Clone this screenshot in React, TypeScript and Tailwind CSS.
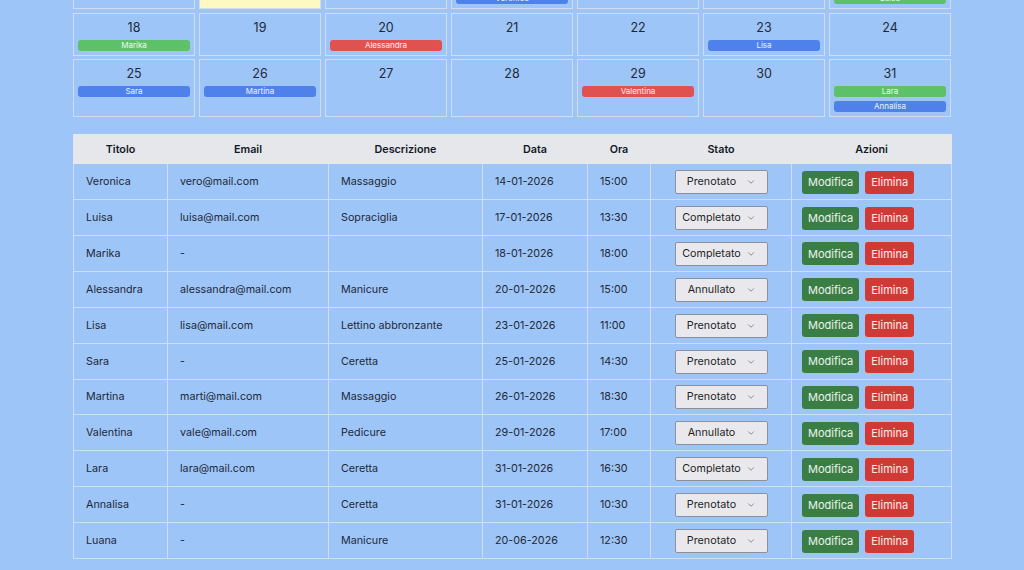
import { ChevronDown } from 'lucide-react'

type Status = 'Prenotato' | 'Completato' | 'Annullato'

interface Appointment {
  titolo: string
  email: string
  descrizione: string
  data: string
  ora: string
  stato: Status
}

const appointments: Appointment[] = [
  { titolo: 'Veronica', email: 'vero@mail.com', descrizione: 'Massaggio', data: '14-01-2026', ora: '15:00', stato: 'Prenotato' },
  { titolo: 'Luisa', email: 'luisa@mail.com', descrizione: 'Sopraciglia', data: '17-01-2026', ora: '13:30', stato: 'Completato' },
  { titolo: 'Marika', email: '-', descrizione: '', data: '18-01-2026', ora: '18:00', stato: 'Completato' },
  { titolo: 'Alessandra', email: 'alessandra@mail.com', descrizione: 'Manicure', data: '20-01-2026', ora: '15:00', stato: 'Annullato' },
  { titolo: 'Lisa', email: 'lisa@mail.com', descrizione: 'Lettino abbronzante', data: '23-01-2026', ora: '11:00', stato: 'Prenotato' },
  { titolo: 'Sara', email: '-', descrizione: 'Ceretta', data: '25-01-2026', ora: '14:30', stato: 'Prenotato' },
  { titolo: 'Martina', email: 'marti@mail.com', descrizione: 'Massaggio', data: '26-01-2026', ora: '18:30', stato: 'Prenotato' },
  { titolo: 'Valentina', email: 'vale@mail.com', descrizione: 'Pedicure', data: '29-01-2026', ora: '17:00', stato: 'Annullato' },
  { titolo: 'Lara', email: 'lara@mail.com', descrizione: 'Ceretta', data: '31-01-2026', ora: '16:30', stato: 'Completato' },
  { titolo: 'Annalisa', email: '-', descrizione: 'Ceretta', data: '31-01-2026', ora: '10:30', stato: 'Prenotato' },
  { titolo: 'Luana', email: '-', descrizione: 'Manicure', data: '20-06-2026', ora: '12:30', stato: 'Prenotato' },
]

const pillColor: Record<Status, string> = {
  Prenotato: 'bg-[#4f81eb]',
  Completato: 'bg-[#5cc169]',
  Annullato: 'bg-[#e0524f]',
}

const weekDays = ['Dom', 'Lun', 'Mar', 'Mer', 'Gio', 'Ven', 'Sab']
const TODAY = 12

// gennaio 2026 parte di giovedì
function buildMonth() {
  const cells: (number | null)[] = [null, null, null, null]
  for (let d = 1; d <= 31; d++) cells.push(d)
  const weeks: (number | null)[][] = []
  for (let i = 0; i < cells.length; i += 7) weeks.push(cells.slice(i, i + 7))
  return weeks
}

function eventsFor(day: number) {
  const key = `${String(day).padStart(2, '0')}-01-2026`
  return appointments.filter((a) => a.data === key)
}

function Calendar() {
  const weeks = buildMonth()
  return (
    <div>
      <div className="flex items-center justify-between py-3">
        <button className="px-3 py-1 rounded bg-[#4f81eb] text-white text-[12px]">‹</button>
        <h2 className="text-[18px] font-semibold text-[#1f2937]">Gennaio 2026</h2>
        <button className="px-3 py-1 rounded bg-[#4f81eb] text-white text-[12px]">›</button>
      </div>
      <div className="grid grid-cols-7 gap-1 mb-1">
        {weekDays.map((d) => (
          <div key={d} className="text-center text-[12px] font-semibold text-[#1f2937] py-1">
            {d}
          </div>
        ))}
      </div>
      <div className="flex flex-col gap-[3.5px]">
        {weeks.map((week, wi) => (
          <div key={wi} className="grid grid-cols-7 gap-1">
            {week.map((day, di) => (
              <div
                key={di}
                className={`border border-[#cfdcf1] p-1 min-h-[43px] ${
                  day === TODAY ? 'bg-[#fef9c3]' : ''
                }`}
              >
                {day && (
                  <>
                    <div className="text-center text-[12.5px] leading-[19px] text-[#1f2937] mb-[3px]">{day}</div>
                    <div className="flex flex-col gap-1">
                      {eventsFor(day).map((e) => (
                        <div
                          key={e.titolo}
                          className={`${pillColor[e.stato]} h-[11px] rounded-[3px] text-center text-[8px] leading-[11px] text-white/90`}
                        >
                          {e.titolo}
                        </div>
                      ))}
                    </div>
                  </>
                )}
              </div>
            ))}
          </div>
        ))}
      </div>
    </div>
  )
}

function StatusSelect({ value }: { value: Status }) {
  return (
    <div className="mx-auto w-[93px] h-[24px] flex items-center border border-[#8d909a] rounded-[2px] bg-[#e9e9ed] text-[#1f1f1f]">
      <span className="flex-1 text-center pl-[4px] text-[10.75px]">{value}</span>
      <ChevronDown className="w-[10px] h-[10px] ml-[2px] mr-[11px] text-[#555]" strokeWidth={1.5} />
    </div>
  )
}

const headers = [
  { label: 'Titolo', w: 'w-[94px]' },
  { label: 'Email', w: 'w-[161px]' },
  { label: 'Descrizione', w: 'w-[154px]' },
  { label: 'Data', w: 'w-[105px]' },
  { label: 'Ora', w: 'w-[63px]' },
  { label: 'Stato', w: 'w-[141px]' },
  { label: 'Azioni', w: 'w-[160px]' },
]

function AppointmentsTable() {
  const td = 'border border-[#d0def3] px-3 pt-px text-[10.75px] text-[#1f2937]'
  return (
    <table className="w-full table-fixed border-collapse mt-[17px]">
      <thead>
        <tr className="h-[29px] bg-[#e5e7eb]">
          {headers.map((h) => (
            <th key={h.label} className={`${h.w} border border-[#e5e7eb] pt-px text-center text-[10.75px] font-semibold text-[#111827]`}>
              {h.label}
            </th>
          ))}
        </tr>
      </thead>
      <tbody>
        {appointments.map((a) => (
          <tr key={a.titolo} className="h-[35.9px]">
            <td className={td}>{a.titolo}</td>
            <td className={td}>{a.email}</td>
            <td className={td}>{a.descrizione}</td>
            <td className={td}>{a.data}</td>
            <td className={td}>{a.ora}</td>
            <td className={td}>
              <StatusSelect value={a.stato} />
            </td>
            <td className={`${td} px-[10px]`}>
              <div className="flex gap-[6px]">
                <button className="h-[23px] px-[6px] rounded-[3px] bg-[#3b7e45] text-[11px] text-white/90">Modifica</button>
                <button className="h-[23px] px-[6px] rounded-[3px] bg-[#d03a36] text-[11px] text-white/90">Elimina</button>
              </div>
            </td>
          </tr>
        ))}
      </tbody>
    </table>
  )
}

export default function App() {
  return (
    <div className="h-screen overflow-hidden flex flex-col justify-end bg-[#9ec5f8] font-['Inter',sans-serif]">
      <div className="shrink-0 w-[878px] mx-auto pb-[11px]">
        <Calendar />
        <AppointmentsTable />
      </div>
    </div>
  )
}
